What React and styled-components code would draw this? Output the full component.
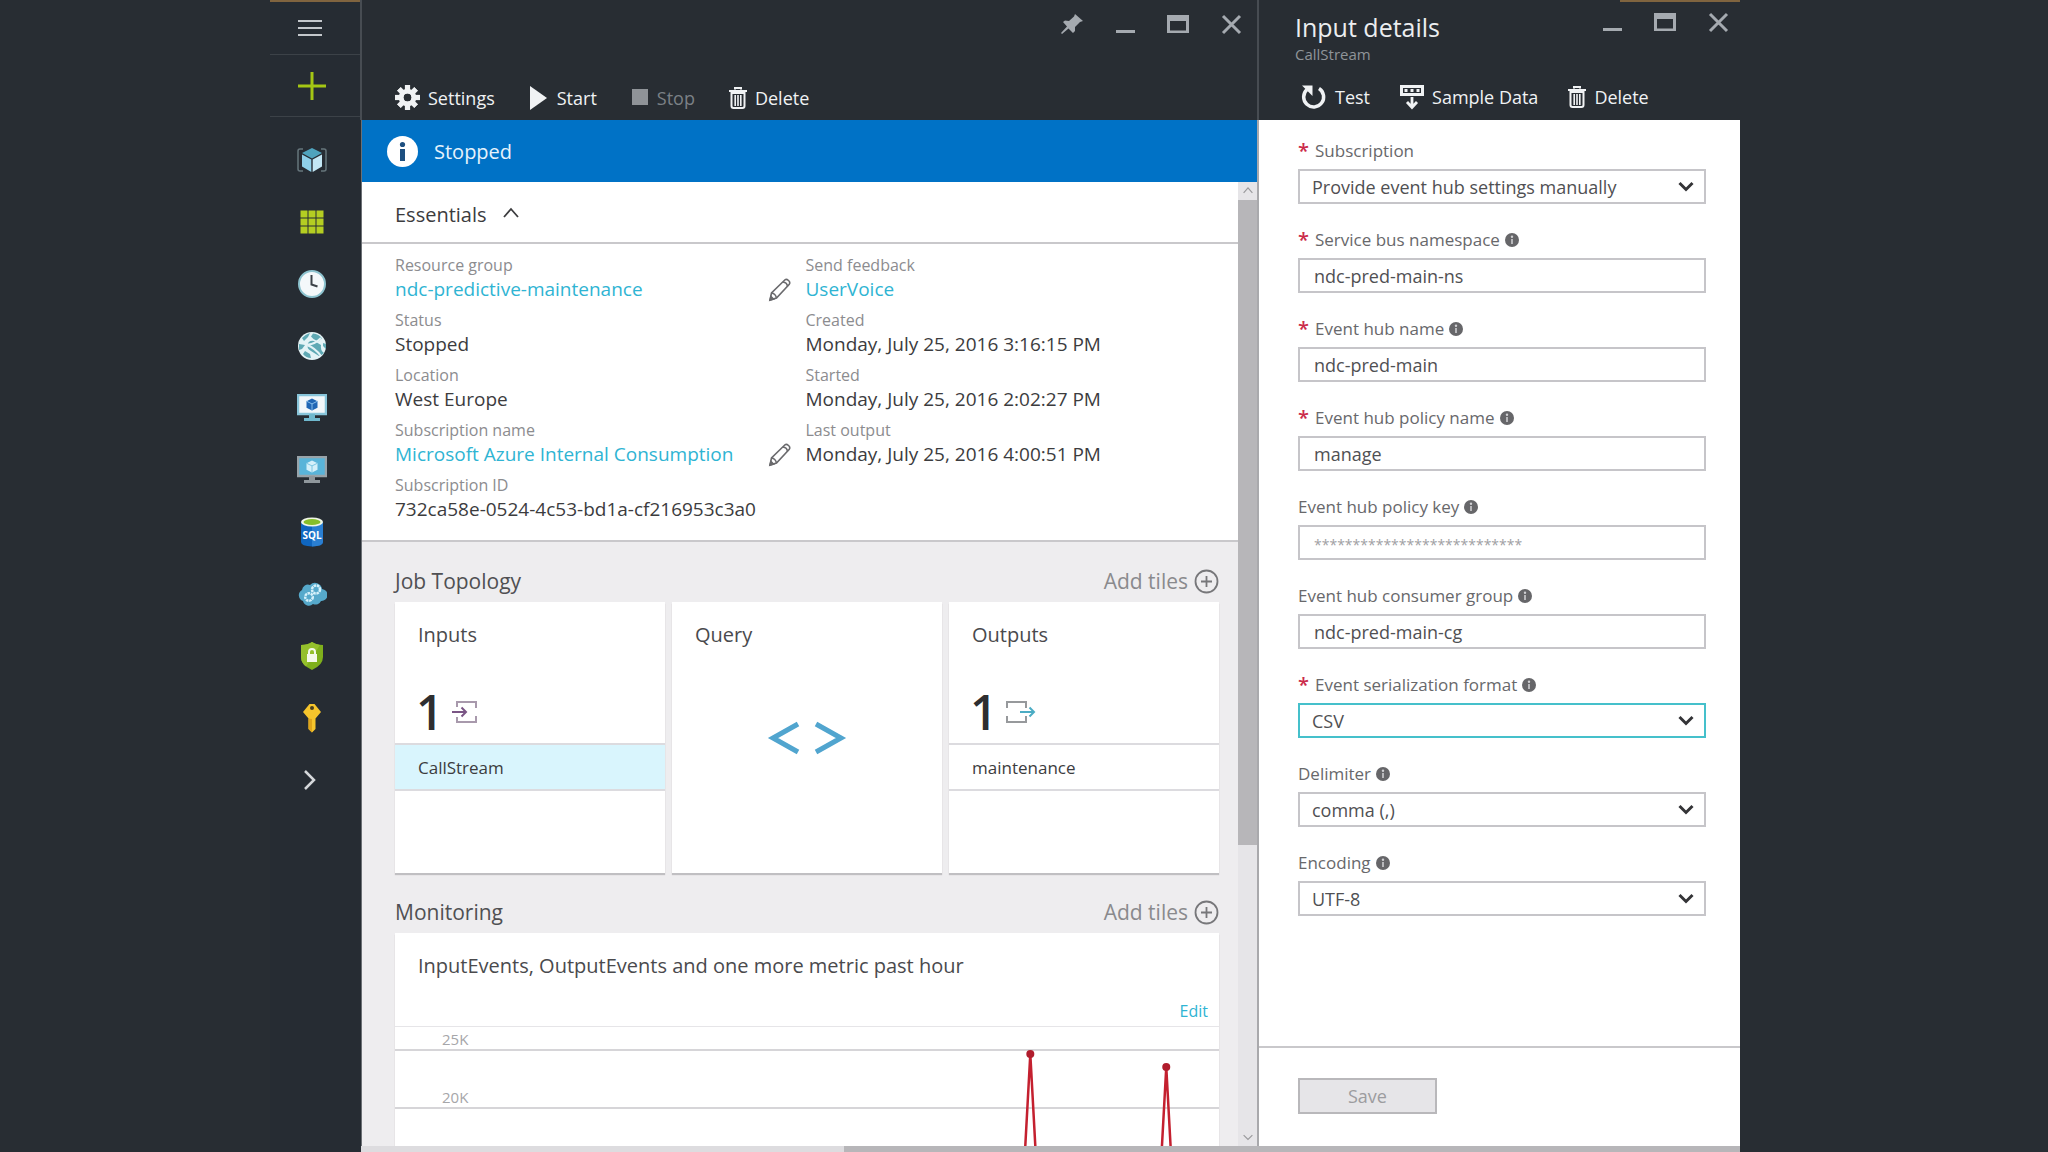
import React from 'react';
import styled, { createGlobalStyle, css } from 'styled-components';

const colors = {
  shell: '#282d33',
  blue: '#0072c6',
  link: '#2fb4d3',
  text: '#3c3c3e',
  muted: '#8c8c8f',
  panel: '#eeedef',
  line: '#c9c8cb',
  thumb: '#b7b6b9',
};

const GlobalStyle = createGlobalStyle`
  * {
    box-sizing: border-box;
  }

  body {
    margin: 0;
    background-color: ${colors.shell};
    color: ${colors.text};
    font-family: 'Open Sans', 'Noto Sans', sans-serif;
    font-size: 17px;
  }

  button,
  input,
  select {
    font: inherit;
    color: inherit;
  }

  svg {
    display: block;
    flex: none;
  }
`;

const Page = styled.div`
  display: grid;
  grid-template-columns: minmax(0, 270fr) 91px minmax(0, 1379fr) minmax(0, 308fr);
  height: 100vh;
  overflow: hidden;
`;

const Sidebar = styled.nav`
  grid-column: 2;
  display: flex;
  flex-direction: column;
  background-color: #262c33;
  border-top: 2px solid #80643f;
`;

const plainButton = css`
  display: flex;
  align-items: center;
  padding: 0;
  border: 0;
  background: none;
  cursor: pointer;
`;

const SidebarButton = styled.button`
  ${plainButton}
  justify-content: center;
  height: ${props => props.$height || 62}px;
  padding-right: ${props => (props.$menu ? 12 : 8)}px;
  border-bottom: ${props => (props.$ruled ? '1px solid #3c4248' : '0')};
`;

const SidebarList = styled.div`
  display: flex;
  flex-direction: column;
  padding-top: 12px;
`;

const Journey = styled.div`
  grid-column: 3;
  display: flex;
  flex-direction: column;
  min-height: 0;
`;

const Blades = styled.div`
  flex: 1;
  display: grid;
  grid-template-columns: minmax(0, 896fr) minmax(0, 483fr);
  min-height: 0;
`;

const Blade = styled.section`
  display: flex;
  flex-direction: column;
  min-height: 0;
  background-color: ${colors.shell};
  border-left: ${props => (props.$wide ? '1px solid #6c7075' : '2px solid #a9a9ac')};
`;

const BladeHeader = styled.header`
  display: flex;
  flex-direction: column;
  justify-content: space-between;
  height: 120px;
  background-color: ${colors.shell};
  color: #eceef0;
  margin-left: -2px;
  border-left: 2px solid #474c52;
`;

const HeaderAccent = styled.div`
  align-self: flex-end;
  width: 25%;
  height: 2px;
  background-color: ${props => (props.$visible ? '#80643f' : 'transparent')};
`;

const TitleRow = styled.div`
  flex: 1;
  display: flex;
  justify-content: space-between;
  align-items: flex-start;
  padding: ${props => (props.$titled ? '8px 10px 0 36px' : '10px 14px 0 32px')};
`;

const Title = styled.h1`
  margin: 0;
  font-size: 25px;
  font-weight: 400;
  line-height: 34px;
`;

const Subtitle = styled.div`
  font-size: 15px;
  line-height: 20px;
  color: #8f9499;
`;

const WindowButtons = styled.div`
  display: flex;
  gap: 29px;
`;

const WindowButton = styled.button`
  ${plainButton}
  color: #a5aab0;
`;

const Toolbar = styled.div`
  display: flex;
  gap: ${props => (props.$gap)}px;
  padding: 0 0 10px ${props => (props.$titled ? 42 : 33)}px;
  font-size: 18px;
`;

const Command = styled.button`
  ${plainButton}
  gap: 8px;
  line-height: 24px;
  color: ${props => (props.disabled ? '#7b8086' : '#f0f2f4')};
`;

const StatusBanner = styled.div`
  display: flex;
  align-items: center;
  gap: 16px;
  height: 62px;
  padding-left: 25px;
  background-color: ${colors.blue};
  color: #e6f3fc;
  font-size: 20px;
`;

const ScrollArea = styled.div`
  flex: 1;
  display: flex;
  min-height: 0;
`;

const BladeContent = styled.div`
  flex: 1;
  min-width: 0;
  overflow: hidden;
  background-color: ${colors.panel};
`;

const VerticalBar = styled.div`
  display: flex;
  flex-direction: column;
  width: 19px;
  background-color: #e6e5e8;
`;

const BarArrow = styled.button`
  ${plainButton}
  justify-content: center;
  height: 18px;
  color: #98989b;
`;

const VerticalThumb = styled.div`
  flex: 646;
  background-color: ${colors.thumb};
`;

const VerticalRest = styled.div`
  flex: 284;
`;

const HorizontalBar = styled.div`
  display: flex;
  justify-content: flex-end;
  height: 6px;
  background-color: #dddcdf;
`;

const HorizontalThumb = styled.div`
  width: 65%;
  background-color: ${colors.thumb};
`;

const EssentialsToggle = styled.button`
  ${plainButton}
  gap: 16px;
  width: 100%;
  height: 62px;
  padding-top: 4px;
  padding-left: 33px;
  border-bottom: 2px solid ${colors.line};
  background-color: #fff;
  font-size: 20px;
`;

const EssentialsGrid = styled.div`
  display: grid;
  grid-template-columns: minmax(0, 411fr) minmax(0, 433fr);
  padding: 9px 0 12px 33px;
  border-bottom: 2px solid ${colors.line};
  background-color: #fff;
`;

const PropertyList = styled.dl`
  margin: 0;
`;

const PropertyLabel = styled.dt`
  font-size: 16px;
  line-height: 24px;
  color: ${colors.muted};
`;

const PropertyValue = styled.dd`
  display: flex;
  align-items: center;
  justify-content: space-between;
  height: 31px;
  margin: 0;
  padding: 0 14px 6px 0;
  font-size: 19px;
  line-height: 25px;
`;

const Link = styled.a`
  color: ${colors.link};
  text-decoration: none;
`;

const IconButton = styled.button`
  ${plainButton}
`;

const Lens = styled.section`
  padding: 25px 19px 0 33px;
`;

const LensHeader = styled.div`
  display: flex;
  justify-content: space-between;
  align-items: center;
  height: 28px;
  margin-bottom: 7px;
`;

const LensTitle = styled.h2`
  margin: 0;
  font-size: 21px;
  font-weight: 400;
  color: #505053;
`;

const AddTiles = styled.button`
  ${plainButton}
  gap: 6px;
  font-size: 21px;
  line-height: 26px;
  color: #8a8a8d;
`;

const Tiles = styled.div`
  display: grid;
  grid-template-columns: repeat(3, minmax(0, 1fr));
  gap: 7px;
`;

const Tile = styled.article`
  display: flex;
  flex-direction: column;
  min-height: 271px;
  background-color: #fff;
  box-shadow: 0 2px 1px #c0bfc2;
`;

const TileTitle = styled.h3`
  margin: 0;
  padding: 20px 23px 0;
  font-size: 20px;
  font-weight: 400;
  line-height: 26px;
  color: #4a4a4d;
`;

const TileCount = styled.div`
  display: flex;
  align-items: center;
  gap: 9px;
  height: 95px;
  padding: 33px 0 0 21px;
  font-size: 48px;
  font-weight: 600;
  line-height: 62px;
  color: #2e2e30;
`;

const TileItem = styled.button`
  ${plainButton}
  height: 48px;
  padding-left: 23px;
  border-top: 2px solid #dcdbdf;
  border-bottom: 2px solid #dcdbdf;
  background-color: ${props => (props.$selected ? '#d9f5fd' : '#fff')};
`;

const TileFigure = styled.div`
  flex: 1;
  display: flex;
  align-items: center;
  justify-content: center;
  padding-bottom: 46px;
`;

const EditRow = styled.div`
  display: flex;
  justify-content: flex-end;
  padding: 21px 11px 4px;
  font-size: 16px;
  line-height: 22px;
`;

const Chart = styled.div`
  position: relative;
  border-top: 1px solid #e6e5e8;
`;

const ChartBand = styled.div`
  display: flex;
  align-items: flex-end;
  height: ${props => (props.$short ? 24 : 58)}px;
  padding-left: 47px;
  border-bottom: 2px solid #d6d5d8;
  font-size: 15px;
  line-height: 20px;
  color: #a6a6a9;
`;

const ChartLayer = styled.svg`
  position: absolute;
  inset: 0;
  overflow: visible;
`;

const Form = styled.form`
  flex: 1;
  display: flex;
  flex-direction: column;
  min-height: 0;
  background-color: #fff;
`;

const Fields = styled.div`
  flex: 1;
  display: flex;
  flex-direction: column;
  gap: 24px;
  min-height: 0;
  padding: 19px 34px 0 39px;
  overflow: hidden;
`;

const Field = styled.div`
  display: flex;
  flex-direction: column;
  gap: 6px;
`;

const FieldLabel = styled.label`
  display: flex;
  align-items: center;
  gap: 5px;
  line-height: 24px;
  color: #68686b;
`;

const Required = styled.span`
  width: 12px;
  font-size: 20px;
  font-weight: 600;
  color: #cb2b4a;
`;

const control = css`
  width: 100%;
  height: 35px;
  border: 2px solid ${props => (props.$active ? '#45c0cb' : '#c6c5c9')};
  border-radius: 0;
  background-color: #fff;
  color: #505053;
  font-size: 18px;
  outline: none;
`;

const TextInput = styled.input`
  ${control}
  padding: 0 14px;

  &::placeholder {
    font-size: 14px;
    color: #a0a0a3;
    opacity: 1;
  }
`;

const SelectBox = styled.div`
  position: relative;
`;

const Select = styled.select`
  ${control}
  padding: 0 40px 0 12px;
  appearance: none;
`;

const SelectArrow = styled.svg`
  position: absolute;
  top: 12px;
  right: 12px;
  pointer-events: none;
`;

const FormFooter = styled.footer`
  padding: 30px 39px 32px;
  border-top: 2px solid ${colors.line};
`;

const SaveButton = styled.button`
  width: 139px;
  height: 36px;
  padding: 0;
  border: 2px solid #b9b8bb;
  background-color: #e6e5e8;
  color: #9c9c9f;
  font-size: 18px;
`;

const MenuIcon = () => (
  <svg width="24" height="18" viewBox="0 0 24 18" stroke="#c4c8cc" strokeWidth="2">
    <path d="M0 2h24M0 9h24M0 16h24" />
  </svg>
);

const PlusIcon = () => (
  <svg width="28" height="28" viewBox="0 0 28 28" stroke="#a4c614" strokeWidth="3">
    <path d="M14 0v28M0 14h28" />
  </svg>
);

const CubeIcon = () => (
  <svg width="30" height="26" viewBox="0 0 30 26">
    <path d="M6 2H3q-2 0-2 2v18q0 2 2 2h3M24 2h3q2 0 2 2v18q0 2-2 2h-3" fill="none" stroke="#66757c" strokeWidth="1.5" />
    <path d="M15 1l10 5-10 5.500L5 6z" fill="#4fa3bd" />
    <path d="M5 7.500l9.300 5V25L5 19.500z" fill="#8fd0ea" />
    <path d="M25 7.500l-9.300 5V25l9.300-5.500z" fill="#c3e7f5" />
  </svg>
);

const GridIcon = () => (
  <svg width="24" height="24" viewBox="0 0 24 24" fill="#b4ce22">
    {[0, 8, 16].map(y => [0, 8, 16].map(x => <rect key={`${x}-${y}`} x={x + 0.5} y={y + 0.5} width="7" height="7" />))}
  </svg>
);

const ClockIcon = () => (
  <svg width="30" height="30" viewBox="0 0 30 30">
    <circle cx="15" cy="15" r="13" fill="#f4f8fa" stroke="#8dc3cf" strokeWidth="2" />
    <path d="M14.500 6v9.500l6 2" fill="none" stroke="#3b4248" strokeWidth="2" />
  </svg>
);

const GlobeIcon = () => (
  <svg width="30" height="30" viewBox="0 0 30 30">
    <circle cx="15" cy="15" r="14" fill="#e4f3f6" />
    <path d="M5 7q4-4 8-5l-2 4-4 4zM16 2.500q6 .5 9 5l-4 3q-5-2-7-5zM11 12q3-4 8-1l5 3q-1 5 3 8-3 3-5 3l-8-5q-5-3-3-8zM8 20l5 3 1 4q-5 0-8-4zM26 12l3 1v5l-3-3z" fill="#5fa9b4" />
    <path d="M2 13l6 1-3 4-3 1z" fill="#5fa9b4" />
    <path d="M8 13q8 2 16-6M10 14q8 3 14 11" fill="none" stroke="#e4f3f6" strokeWidth="2" />
  </svg>
);

const MonitorIcon = ({ classic }) => (
  <svg width="30" height="28" viewBox="0 0 30 28">
    <rect x="1" y="1" width="28" height="19" fill={classic ? '#59b4d9' : '#f2f7fa'} stroke={classic ? '#98a3a9' : '#88c5da'} strokeWidth="2.500" />
    <path d="M12 20h6v4h5v3H7v-3h5z" fill={classic ? '#8f979c' : '#6fb8cd'} />
    <path d="M15 4.500l5.500 2.700v6.500L15 16.500l-5.500-2.800V7.200z" fill={classic ? '#d4f0fa' : '#1f66b5'} />
    <path d="M9.500 7.200l5.500 2.700 5.500-2.700M15 10v6.500" fill="none" stroke={classic ? '#7cc6e2' : '#83bcea'} strokeWidth="1" />
  </svg>
);

const SqlIcon = () => (
  <svg width="24" height="30" viewBox="0 0 24 30">
    <path d="M1 5v20q0 4 11 4.500 11-.5 11-4.500V5z" fill="#0f66c0" />
    <path d="M12 5v24.500q11-.5 11-4.500V5z" fill="#2a7fd2" />
    <ellipse cx="12" cy="5" rx="11" ry="4.500" fill="#f0f6e6" />
    <ellipse cx="12" cy="5" rx="8.500" ry="3" fill="#86be2a" />
    <text x="12" y="22" textAnchor="middle" fontFamily="Open Sans, sans-serif" fontSize="10" fontWeight="700" fill="#fff">SQL</text>
  </svg>
);

const CloudIcon = () => (
  <svg width="30" height="26" viewBox="0 0 30 26">
    <path d="M6 20a6 6 0 01-1-11 6 6 0 018-5 7 7 0 0112 4 6 6 0 01-1 12 6 6 0 01-8 3 6 6 0 01-10-3z" fill="#56a9cb" />
    <circle cx="19" cy="8.500" r="4" fill="none" stroke="#d6f1fa" strokeWidth="2.500" strokeDasharray="2.500 0.700" />
    <circle cx="12" cy="16" r="3.800" fill="none" stroke="#d6f1fa" strokeWidth="2.500" strokeDasharray="2.500 0.700" />
  </svg>
);

const ShieldIcon = () => (
  <svg width="24" height="28" viewBox="0 0 24 28">
    <path d="M12 0q4 3 11 3v12q0 8-11 13Q1 23 1 15V3q7 0 11-3z" fill="#7fb01c" />
    <path d="M12 0Q8 3 1 3v12q0 6 5 9.500L20 3q-5-1-8-3z" fill="#95c02c" />
    <rect x="7" y="12" width="10" height="8" fill="#f5f9ea" />
    <path d="M9 12v-2a3 3 0 016 0v2" fill="none" stroke="#f5f9ea" strokeWidth="2" />
  </svg>
);

const KeyIcon = () => (
  <svg width="20" height="30" viewBox="0 0 20 30">
    <path d="M7.500 1h5L19 9l-5.500 6.500V26L10 29.500 6.500 26V15.500L1 9z" fill="#f6c52c" />
    <path d="M10 16v13.500L6.500 26V15.500z" fill="#dfa51c" />
    <circle cx="10" cy="5" r="2" fill="#4a3f1e" />
  </svg>
);

const ChevronRightIcon = () => (
  <svg width="16" height="20" viewBox="0 0 16 20" fill="none" stroke="#d5d8db" strokeWidth="2.500">
    <path d="M1 1l9 9-9 9" />
  </svg>
);

const ChevronUpIcon = ({ size = 16, down }) => (
  <svg width={size} height={size} viewBox="0 0 16 16" fill="none" stroke="currentColor" strokeWidth="1.800">
    <path d={down ? 'M1 5l7 7 7-7' : 'M1 11l7-8 7 8'} />
  </svg>
);

const PinIcon = () => (
  <svg width="24" height="24" viewBox="0 0 24 24">
    <path d="M15 2l8 7-3 1-5 5v4l-2 2-4.500-4.500L2 22l-1-1 6-6.500L3 10l2-1.500 4 .5 5-4.500z" fill="currentColor" />
  </svg>
);

const MinimizeIcon = () => (
  <svg width="24" height="24" viewBox="0 0 24 24">
    <path d="M3 19.500h19" stroke="currentColor" strokeWidth="3" />
  </svg>
);

const MaximizeIcon = () => (
  <svg width="24" height="24" viewBox="0 0 24 24">
    <path d="M1 3h22v18H1zM4 9v9.500h16V9z" fill="currentColor" fillRule="evenodd" />
  </svg>
);

const CloseIcon = () => (
  <svg width="24" height="24" viewBox="0 0 24 24">
    <path d="M4 4l17 17M21 4L4 21" stroke="currentColor" strokeWidth="3" />
  </svg>
);

const GearIcon = () => (
  <svg width="25" height="25" viewBox="-12 -12 24 24" fill="currentColor">
    {[0, 45, 90, 135].map(angle => <rect key={angle} x="-2.500" y="-12" width="5" height="24" transform={`rotate(${angle})`} mask="url(#gear-hole)" />)}
    <circle r="6.200" fill="none" stroke="currentColor" strokeWidth="4.500" />
    <mask id="gear-hole" maskUnits="userSpaceOnUse" x="-12" y="-12" width="24" height="24">
      <rect x="-12" y="-12" width="24" height="24" fill="#fff" />
      <circle r="4" fill="#000" />
    </mask>
  </svg>
);

const PlayIcon = () => (
  <svg width="20" height="24" viewBox="0 0 20 24">
    <path d="M1 0l17 12L1 24z" fill="currentColor" />
  </svg>
);

const StopIcon = () => (
  <svg width="18" height="20" viewBox="0 0 18 20">
    <rect x="1" y="1" width="16" height="16" fill="#8f9398" />
  </svg>
);

const TrashIcon = () => (
  <svg width="18" height="22" viewBox="0 0 18 22">
    <path d="M6 2.500V1h6v1.500M0 4h18" fill="none" stroke="currentColor" strokeWidth="2" />
    <path d="M2.500 6h13v13q0 2-2 2h-9q-2 0-2-2z" fill="none" stroke="currentColor" strokeWidth="2" />
    <path d="M6.200 8v11M9 8v11M11.800 8v11" stroke="currentColor" strokeWidth="1.600" />
  </svg>
);

const RefreshIcon = () => (
  <svg width="26" height="26" viewBox="0 0 26 26">
    <path d="M18 4.500a10 10 0 11-12 1" fill="none" stroke="currentColor" strokeWidth="3.500" />
    <path d="M1 1.500h10.500V12z" fill="currentColor" />
  </svg>
);

const SampleIcon = () => (
  <svg width="24" height="26" viewBox="0 0 24 26">
    <path d="M0 1h24v11H0zM3 4v5h18V4z" fill="currentColor" fillRule="evenodd" />
    <path d="M4.500 6.500h3M10.500 6.500h3M16.500 6.500h3" stroke="currentColor" strokeWidth="3" />
    <path d="M12 13v10M7 18l5 5.500 5-5.500" fill="none" stroke="currentColor" strokeWidth="2.800" />
  </svg>
);

const BannerInfoIcon = () => (
  <svg width="31" height="31" viewBox="0 0 31 31">
    <circle cx="15.500" cy="15.500" r="15.500" fill="#fff" />
    <circle cx="15.500" cy="8.500" r="2.600" fill="#1d4f80" />
    <rect x="13" y="13" width="5" height="12" fill="#1d4f80" />
  </svg>
);

const InfoIcon = () => (
  <svg width="14" height="14" viewBox="0 0 14 14">
    <circle cx="7" cy="7" r="7" fill="#666669" />
    <circle cx="7" cy="3.800" r="1.200" fill="#d0d0d3" />
    <rect x="6" y="6" width="2" height="5" fill="#b8b8bb" />
  </svg>
);

const PencilIcon = () => (
  <svg width="24" height="24" viewBox="0 0 24 24" fill="none" stroke="#6a6a6d" strokeWidth="1.600">
    <path d="M2 22l1.500-7L17 1.800q1.500-1 3.500.7t.8 3.700L8.500 20z" />
    <path d="M3.500 15q4 .5 5 5M15 4q4 .5 4.500 4.300" />
    <path d="M2 22l1-3.500 2.500 2.500z" fill="#6a6a6d" />
  </svg>
);

const AddCircleIcon = () => (
  <svg width="25" height="25" viewBox="0 0 25 25" fill="none" stroke="#77777a" strokeWidth="1.800">
    <circle cx="12.500" cy="12.500" r="11" />
    <path d="M12.500 7v11M7 12.500h11" />
  </svg>
);

const InputIcon = () => (
  <svg width="26" height="24" viewBox="0 0 26 24" fill="none">
    <path d="M5 7V2h19v6M5 17v5h19v-6" stroke="#a899ac" strokeWidth="2" />
    <path d="M0 12h14M9.500 7.500L14 12l-4.500 4.500" stroke="#7a5585" strokeWidth="2" />
  </svg>
);

const OutputIcon = () => (
  <svg width="30" height="24" viewBox="0 0 30 24" fill="none">
    <path d="M1 8V2h19v6M1 16v6h19v-6" stroke="#97999c" strokeWidth="2" />
    <path d="M14 12h14M23.500 7.500L28 12l-4.500 4.500" stroke="#4bacc4" strokeWidth="2" />
  </svg>
);

const CodeIcon = () => (
  <svg width="80" height="34" viewBox="0 0 80 34" fill="none" stroke="#51a5cf" strokeWidth="5">
    <path d="M31 3L6 17l25 14M49 3l25 14-25 14" />
  </svg>
);

const sidebarItems = [
  ['Resource groups', <CubeIcon />],
  ['All resources', <GridIcon />],
  ['Recent', <ClockIcon />],
  ['App Services', <GlobeIcon />],
  ['Virtual machines', <MonitorIcon />],
  ['Virtual machines (classic)', <MonitorIcon classic />],
  ['SQL databases', <SqlIcon />],
  ['Cloud services', <CloudIcon />],
  ['Security Center', <ShieldIcon />],
  ['Subscriptions', <KeyIcon />],
  ['Browse', <ChevronRightIcon />],
];

const leftProperties = [
  { label: 'Resource group', value: 'ndc-predictive-maintenance', link: true, editable: true },
  { label: 'Status', value: 'Stopped' },
  { label: 'Location', value: 'West Europe' },
  { label: 'Subscription name', value: 'Microsoft Azure Internal Consumption', link: true, editable: true },
  { label: 'Subscription ID', value: '732ca58e-0524-4c53-bd1a-cf216953c3a0' },
];

const rightProperties = [
  { label: 'Send feedback', value: 'UserVoice', link: true },
  { label: 'Created', value: 'Monday, July 25, 2016 3:16:15 PM' },
  { label: 'Started', value: 'Monday, July 25, 2016 2:02:27 PM' },
  { label: 'Last output', value: 'Monday, July 25, 2016 4:00:51 PM' },
];

const fields = [
  { id: 'subscription', label: 'Subscription', value: 'Provide event hub settings manually', required: true, select: true },
  { id: 'namespace', label: 'Service bus namespace', value: 'ndc-pred-main-ns', required: true, info: true },
  { id: 'hub-name', label: 'Event hub name', value: 'ndc-pred-main', required: true, info: true },
  { id: 'policy-name', label: 'Event hub policy name', value: 'manage', required: true, info: true },
  { id: 'policy-key', label: 'Event hub policy key', placeholder: '*'.repeat(27), info: true },
  { id: 'consumer-group', label: 'Event hub consumer group', value: 'ndc-pred-main-cg', info: true },
  { id: 'format', label: 'Event serialization format', value: 'CSV', required: true, info: true, select: true, active: true },
  { id: 'delimiter', label: 'Delimiter', value: 'comma (,)', info: true, select: true },
  { id: 'encoding', label: 'Encoding', value: 'UTF-8', info: true, select: true },
];

const spikes = [
  { x: '77.1%', y: 27 },
  { x: '93.6%', y: 40 },
];

const WindowControls = ({ pin }) => (
  <WindowButtons>
    {pin && <WindowButton aria-label="Pin"><PinIcon /></WindowButton>}
    <WindowButton aria-label="Minimize"><MinimizeIcon /></WindowButton>
    <WindowButton aria-label="Maximize"><MaximizeIcon /></WindowButton>
    <WindowButton aria-label="Close"><CloseIcon /></WindowButton>
  </WindowButtons>
);

const Properties = ({ items }) => (
  <PropertyList>
    {items.map(({ label, value, link, editable }) => (
      <React.Fragment key={label}>
        <PropertyLabel>{label}</PropertyLabel>
        <PropertyValue>
          {link ? <Link href="#">{value}</Link> : value}
          {editable && <IconButton aria-label={`Edit ${label}`}><PencilIcon /></IconButton>}
        </PropertyValue>
      </React.Fragment>
    ))}
  </PropertyList>
);

const LensHead = ({ title }) => (
  <LensHeader>
    <LensTitle>{title}</LensTitle>
    <AddTiles>Add tiles <AddCircleIcon /></AddTiles>
  </LensHeader>
);

const FormField = ({ field }) => (
  <Field>
    <FieldLabel htmlFor={field.id}>
      {field.required && <Required>*</Required>}
      {field.label}
      {field.info && <InfoIcon />}
    </FieldLabel>
    {field.select ? (
      <SelectBox>
        <Select id={field.id} $active={field.active} defaultValue={field.value}>
          <option>{field.value}</option>
        </Select>
        <SelectArrow width="16" height="12" viewBox="0 0 16 12" fill="none" stroke="#343437" strokeWidth="3">
          <path d="M1.500 2L8 8.500 14.500 2" />
        </SelectArrow>
      </SelectBox>
    ) : (
      <TextInput id={field.id} type="text" defaultValue={field.value} placeholder={field.placeholder} />
    )}
  </Field>
);

const JobBlade = () => (
  <Blade $wide>
    <BladeHeader>
      <HeaderAccent />
      <TitleRow>
        <span />
        <WindowControls pin />
      </TitleRow>
      <Toolbar $gap={34}>
        <Command><GearIcon />Settings</Command>
        <Command><PlayIcon />Start</Command>
        <Command disabled><StopIcon />Stop</Command>
        <Command><TrashIcon />Delete</Command>
      </Toolbar>
    </BladeHeader>
    <StatusBanner role="status"><BannerInfoIcon />Stopped</StatusBanner>
    <ScrollArea>
      <BladeContent>
        <EssentialsToggle aria-expanded="true">Essentials <ChevronUpIcon /></EssentialsToggle>
        <EssentialsGrid>
          <Properties items={leftProperties} />
          <Properties items={rightProperties} />
        </EssentialsGrid>
        <Lens>
          <LensHead title="Job Topology" />
          <Tiles>
            <Tile>
              <TileTitle>Inputs</TileTitle>
              <TileCount>1 <InputIcon /></TileCount>
              <TileItem $selected>CallStream</TileItem>
            </Tile>
            <Tile>
              <TileTitle>Query</TileTitle>
              <TileFigure><CodeIcon /></TileFigure>
            </Tile>
            <Tile>
              <TileTitle>Outputs</TileTitle>
              <TileCount>1 <OutputIcon /></TileCount>
              <TileItem>maintenance</TileItem>
            </Tile>
          </Tiles>
        </Lens>
        <Lens>
          <LensHead title="Monitoring" />
          <Tile>
            <TileTitle>InputEvents, OutputEvents and one more metric past hour</TileTitle>
            <EditRow><Link href="#">Edit</Link></EditRow>
            <Chart>
              <ChartBand $short>25K</ChartBand>
              <ChartBand>20K</ChartBand>
              <ChartBand />
              <ChartLayer width="100%" height="100%">
                {spikes.map(({ x, y }) => (
                  <svg key={x} x={x} y={y} overflow="visible">
                    <path d="M-6 110L0 0l6 110" fill="none" stroke="#c4202f" strokeWidth="2.500" />
                    <circle r="4" fill="#b01c2c" />
                  </svg>
                ))}
              </ChartLayer>
            </Chart>
          </Tile>
        </Lens>
      </BladeContent>
      <VerticalBar>
        <BarArrow aria-label="Scroll up"><ChevronUpIcon size={10} /></BarArrow>
        <VerticalThumb />
        <VerticalRest />
        <BarArrow aria-label="Scroll down"><ChevronUpIcon size={10} down /></BarArrow>
      </VerticalBar>
    </ScrollArea>
  </Blade>
);

const InputBlade = () => (
  <Blade>
    <BladeHeader>
      <HeaderAccent $visible />
      <TitleRow $titled>
        <div>
          <Title>Input details</Title>
          <Subtitle>CallStream</Subtitle>
        </div>
        <WindowControls />
      </TitleRow>
      <Toolbar $gap={30} $titled>
        <Command><RefreshIcon />Test</Command>
        <Command><SampleIcon />Sample Data</Command>
        <Command><TrashIcon />Delete</Command>
      </Toolbar>
    </BladeHeader>
    <Form onSubmit={event => event.preventDefault()}>
      <Fields>
        {fields.map(field => <FormField key={field.id} field={field} />)}
      </Fields>
      <FormFooter>
        <SaveButton disabled>Save</SaveButton>
      </FormFooter>
    </Form>
  </Blade>
);

const App = () => (
  <Page>
    <GlobalStyle />
    <Sidebar>
      <SidebarButton $height={53} $ruled $menu aria-label="Menu"><MenuIcon /></SidebarButton>
      <SidebarButton $ruled aria-label="New"><PlusIcon /></SidebarButton>
      <SidebarList>
        {sidebarItems.map(([name, icon]) => (
          <SidebarButton key={name} aria-label={name}>{icon}</SidebarButton>
        ))}
      </SidebarList>
    </Sidebar>
    <Journey>
      <Blades>
        <JobBlade />
        <InputBlade />
      </Blades>
      <HorizontalBar>
        <HorizontalThumb />
      </HorizontalBar>
    </Journey>
  </Page>
);

export default App;
